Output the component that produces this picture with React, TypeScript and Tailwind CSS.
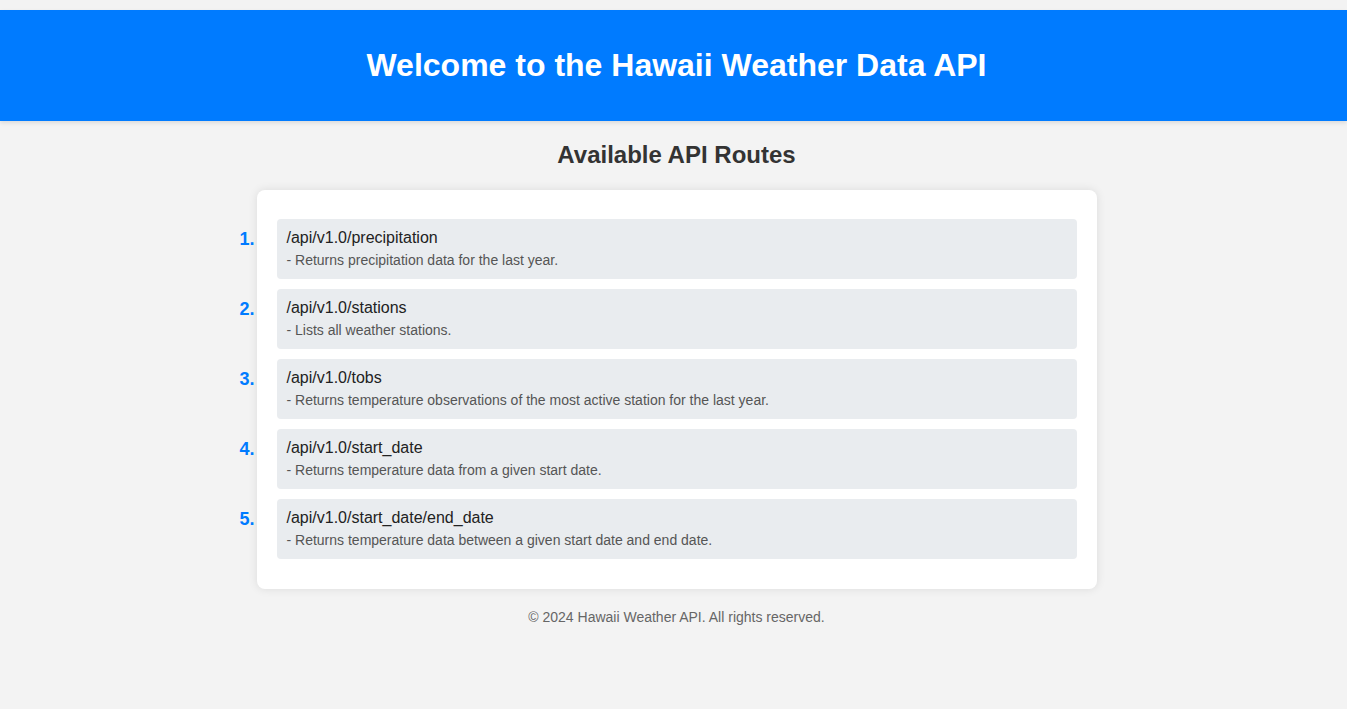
const ROUTES = [
  { path: '/api/v1.0/precipitation', desc: '- Returns precipitation data for the last year.' },
  { path: '/api/v1.0/stations', desc: '- Lists all weather stations.' },
  { path: '/api/v1.0/tobs', desc: '- Returns temperature observations of the most active station for the last year.' },
  { path: '/api/v1.0/start_date', desc: '- Returns temperature data from a given start date.' },
  { path: '/api/v1.0/start_date/end_date', desc: '- Returns temperature data between a given start date and end date.' },
];

export default function App() {
  return (
    <div className="min-h-[709px] bg-[#f3f3f3] pt-[10px] font-['Liberation_Sans',Arial,sans-serif]">
      {/* Header banner */}
      <header className="h-[111px] flex items-center justify-center pl-[6px] bg-[#007bff] shadow-[0_2px_4px_rgba(0,0,0,0.1)]">
        <h1 className="text-[32px] font-bold text-white leading-[37px]">
          Welcome to the Hawaii Weather Data API
        </h1>
      </header>

      <main className="flex flex-col items-center pl-[6px]">
        <h2 className="mt-[20px] text-[24px] font-bold text-[#333] leading-[28px]">
          Available API Routes
        </h2>

        <div className="mt-[21px] w-[840px] bg-white rounded-lg shadow-[0_0_10px_rgba(0,0,0,0.1)] px-[20px] pt-[29px] pb-[30px]">
          <ol className="flex flex-col gap-[10px]">
            {ROUTES.map((r, i) => (
              <li key={r.path} className="flex items-start -ml-[40px]">
                <span className="w-[40px] pr-[22px] pt-[10px] text-right text-[18px] font-bold text-[#007bff] leading-[21px]">
                  {i + 1}.
                </span>
                <div className="flex-1 bg-[#e9ecef] rounded-[4px] px-[10px] py-[10px]">
                  <div className="text-[16px] leading-[18px] text-[#222]">{r.path}</div>
                  <div className="mt-[5px] text-[14px] leading-[17px] text-[#555]">{r.desc}</div>
                </div>
              </li>
            ))}
          </ol>
        </div>

        <footer className="mt-[20px] text-[14px] leading-[16px] text-[#666]">
          © 2024 Hawaii Weather API. All rights reserved.
        </footer>
      </main>
    </div>
  );
}
